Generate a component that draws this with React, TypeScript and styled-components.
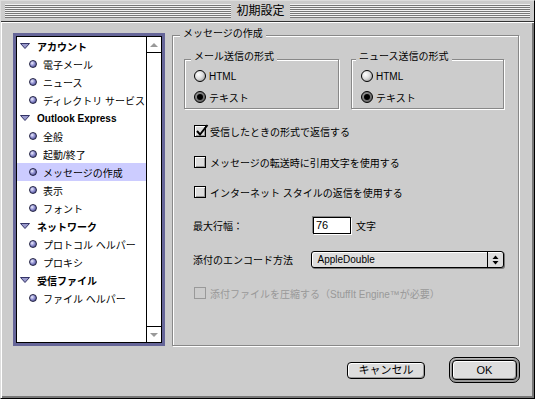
import styled, { createGlobalStyle } from "styled-components";

const GlobalStyle = createGlobalStyle`
  html, body {
    margin: 0;
    padding: 0;
    background: #cccccc;
  }
  body {
    font-family: "Liberation Sans", "Noto Sans CJK JP", sans-serif;
    font-size: 10px;
    color: #000;
  }
  * {
    box-sizing: border-box;
  }
`;

const Window = styled.div`
  width: 535px;
  height: 399px;
  display: flex;
  flex-direction: column;
  background: #cccccc;
  border: 1px solid #000;
  border-top-color: #dddddd;
  border-left-color: #dddddd;
`;

const TitleBar = styled.div`
  height: 21px;
  padding: 3px 4px 3px 4px;
  border-bottom: 1px solid #333;
  display: flex;
`;

const Stripes = styled.div`
  flex: 1;
  display: flex;
  justify-content: center;
  align-items: center;
  background: repeating-linear-gradient(
    to bottom,
    #f2f2f2 0,
    #f2f2f2 1px,
    #777 1px,
    #777 2px
  );
`;

const TitleText = styled.span`
  background: #cccccc;
  padding: 0 5px;
  margin-right: 14px;
  font-size: 12px;
  line-height: 15px;
`;

const Body = styled.div`
  flex: 1;
  display: grid;
  grid-template-columns: 152px 347px;
  grid-template-rows: 313px 26px;
  column-gap: 7px;
  row-gap: 11px;
  padding: 11px 0 0 12px;
  box-shadow: inset 1px 1px 0 #fff, inset -2px -2px 0 #777;
`;

/* ---------- sidebar ---------- */

const Sidebar = styled.div`
  border: 3px solid #666699;
  display: flex;
`;

const ListFrame = styled.div`
  flex: 1;
  display: flex;
  border: 1px solid #000;
  background: #fff;
`;

const List = styled.ul`
  flex: 1;
  margin: 0;
  padding: 0;
  list-style: none;
`;

const Row = styled.li<{ $header?: boolean; $selected?: boolean }>`
  height: 18px;
  display: flex;
  align-items: center;
  gap: ${(p) => (p.$header ? 7 : 6)}px;
  padding-left: ${(p) => (p.$header ? 3 : 12)}px;
  font-weight: ${(p) => (p.$header ? 700 : 400)};
  background: ${(p) => (p.$selected ? "#ccccff" : "transparent")};
  white-space: nowrap;
`;

const Bullet = styled.span`
  width: 8px;
  height: 8px;
  border-radius: 50%;
  border: 1px solid #222244;
  background: radial-gradient(
    circle at 35% 35%,
    #eeeeff 0,
    #9090d0 45%,
    #333377 100%
  );
  flex: none;
`;

const Scrollbar = styled.div`
  width: 15px;
  border-left: 1px solid #000;
  display: flex;
  flex-direction: column;
  justify-content: space-between;
`;

const ScrollArrow = styled.div<{ $down?: boolean }>`
  height: 16px;
  display: flex;
  align-items: center;
  justify-content: center;
  ${(p) => (p.$down ? "border-top: 1px solid #000;" : "border-bottom: 1px solid #000;")}
  &::after {
    content: "";
    border-left: 4px solid transparent;
    border-right: 4px solid transparent;
    ${(p) => (p.$down ? "border-top: 4px solid #999;" : "border-bottom: 4px solid #999;")}
  }
`;

/* ---------- group boxes ---------- */

const GroupBox = styled.div`
  position: relative;
  border: 1px solid #888;
  box-shadow: inset 1px 1px 0 #fff, 1px 1px 0 #fff;
`;

const MainGroup = styled(GroupBox)`
  margin-top: 2px;
  height: 311px;
  padding: 23px 14px 0 11px;
  display: flex;
  flex-direction: column;
`;

const GroupTitle = styled.span<{ $left: number; $top: number }>`
  position: absolute;
  top: ${(p) => p.$top}px;
  left: ${(p) => p.$left}px;
  padding: 0 3px;
  background: #cccccc;
  line-height: 12px;
  white-space: nowrap;
`;

const SubRow = styled.div`
  display: flex;
  gap: 12px;
`;

const SubGroup = styled(GroupBox)<{ $width: number }>`
  width: ${(p) => p.$width}px;
  height: 50px;
  padding: 8px 0 0 9px;
  display: flex;
  flex-direction: column;
  gap: 5px;
`;

const OptionRow = styled.label<{ $gap: number; $top?: number; $disabled?: boolean }>`
  height: 16px;
  display: flex;
  align-items: center;
  gap: ${(p) => p.$gap}px;
  margin-top: ${(p) => p.$top ?? 0}px;
  color: ${(p) => (p.$disabled ? "#999" : "#000")};
  white-space: nowrap;
`;

const Radio = styled.span<{ $on?: boolean }>`
  position: relative;
  width: 12px;
  height: 12px;
  flex: none;
  border-radius: 50%;
  border: 1px solid #000;
  background: ${(p) =>
    p.$on
      ? "radial-gradient(circle at 35% 35%, #999 0, #555 100%)"
      : "radial-gradient(circle at 35% 35%, #fff 0, #ddd 45%, #888 100%)"};
  &::after {
    content: "";
    display: ${(p) => (p.$on ? "block" : "none")};
    position: absolute;
    left: 2px;
    top: 2px;
    width: 6px;
    height: 6px;
    border-radius: 50%;
    background: #000;
  }
`;

const Checkbox = styled.span<{ $disabled?: boolean }>`
  position: relative;
  width: 12px;
  height: 12px;
  flex: none;
  border: 1px solid ${(p) => (p.$disabled ? "#999" : "#000")};
  background: ${(p) => (p.$disabled ? "transparent" : "#dddddd")};
  box-shadow: ${(p) =>
    p.$disabled ? "none" : "inset 1px 1px 0 #fff, inset -1px -1px 0 #999"};
`;

const CheckMark = styled.svg`
  position: absolute;
  left: 0;
  top: -3px;
`;

const Checks = styled.div`
  margin-left: 10px;
  display: flex;
  flex-direction: column;
`;

const FieldRow = styled.div<{ $top: number }>`
  display: flex;
  align-items: center;
  margin-top: ${(p) => p.$top}px;
  margin-left: -1px;
`;

const FieldLabel = styled.span`
  width: 120px;
`;

const NumberInput = styled.div`
  width: 38px;
  height: 17px;
  border: 1px solid #000;
  background: #fff;
  box-shadow: -1px -1px 0 #888, 1px 1px 0 #fff;
  padding: 1px 2px;
  font-size: 11px;
  line-height: 13px;
`;

const Unit = styled.span`
  margin-left: 5px;
`;

const Popup = styled.div`
  width: 195px;
  height: 17px;
  display: flex;
  border: 1px solid #000;
  border-radius: 3px;
  background: #dddddd;
  box-shadow: inset 1px 1px 0 #fff, 1px 1px 0 #777;
`;

const PopupValue = styled.span`
  flex: 1;
  padding-left: 5px;
  line-height: 15px;
`;

const PopupArrows = styled.span`
  width: 16px;
  border-left: 1px solid #000;
  display: flex;
  align-items: center;
  justify-content: center;
`;

/* ---------- buttons ---------- */

const ButtonRow = styled.div`
  grid-column: 1 / -1;
  display: flex;
  justify-content: flex-end;
  align-items: center;
  gap: 24px;
  margin-right: -1px;
`;

const Button = styled.button`
  width: 78px;
  height: 17px;
  flex: none;
  padding: 0;
  font-family: inherit;
  font-size: 11px;
  line-height: 15px;
  color: #000;
  border: 1px solid #000;
  border-radius: 4px;
  background: #dddddd;
  box-shadow: inset 1px 1px 0 #fff, inset -1px -1px 0 #999;
`;

const DefaultRing = styled.div`
  width: 71px;
  height: 26px;
  flex: none;
  padding: 2px;
  border: 1px solid #000;
  border-radius: 7px;
  background: #999;
  box-shadow: inset 1px 1px 0 #bbb;
  display: flex;

  & > ${Button} {
    width: 100%;
    height: 100%;
  }
`;

const tree = [
  { label: "アカウント", items: ["電子メール", "ニュース", "ディレクトリ サービス"] },
  { label: "Outlook Express", items: ["全般", "起動/終了", "メッセージの作成", "表示", "フォント"] },
  { label: "ネットワーク", items: ["プロトコル ヘルパー", "プロキシ"] },
  { label: "受信ファイル", items: ["ファイル ヘルパー"] },
];

const Disclosure = () => (
  <svg width="10" height="6" viewBox="0 0 10 6" style={{ flex: "none" }}>
    <polygon points="0.5,0.5 9.5,0.5 5,5.5" fill="#9999cc" stroke="#333366" strokeWidth="1" />
  </svg>
);

export default function App() {
  return (
    <>
      <GlobalStyle />
      <Window>
        <TitleBar>
          <Stripes>
            <TitleText>初期設定</TitleText>
          </Stripes>
        </TitleBar>
        <Body>
          <Sidebar>
            <ListFrame>
              <List>
                {tree.map((g) => (
                  <li key={g.label} style={{ display: "contents" }}>
                    <Row $header as="div">
                      <Disclosure />
                      {g.label}
                    </Row>
                    {g.items.map((it) => (
                      <Row as="div" key={it} $selected={it === "メッセージの作成"}>
                        <Bullet />
                        {it}
                      </Row>
                    ))}
                  </li>
                ))}
              </List>
              <Scrollbar>
                <ScrollArrow />
                <ScrollArrow $down />
              </Scrollbar>
            </ListFrame>
          </Sidebar>

          <MainGroup>
            <GroupTitle $left={7} $top={-8}>メッセージの作成</GroupTitle>
            <SubRow>
              <SubGroup $width={155}>
                <GroupTitle $left={6} $top={-9}>メール送信の形式</GroupTitle>
                <OptionRow $gap={3}>
                  <Radio />
                  HTML
                </OptionRow>
                <OptionRow $gap={3}>
                  <Radio $on />
                  テキスト
                </OptionRow>
              </SubGroup>
              <SubGroup $width={153}>
                <GroupTitle $left={4} $top={-9}>ニュース送信の形式</GroupTitle>
                <OptionRow $gap={3}>
                  <Radio />
                  HTML
                </OptionRow>
                <OptionRow $gap={3}>
                  <Radio $on />
                  テキスト
                </OptionRow>
              </SubGroup>
            </SubRow>

            <Checks>
              <OptionRow $gap={4} $top={14}>
                <Checkbox>
                  <CheckMark width="14" height="14" viewBox="0 0 14 14">
                    <path d="M2 8 L5 11.5 L12.5 2" fill="none" stroke="#000" strokeWidth="2" />
                  </CheckMark>
                </Checkbox>
                受信したときの形式で返信する
              </OptionRow>
              <OptionRow $gap={4} $top={15}>
                <Checkbox />
                メッセージの転送時に引用文字を使用する
              </OptionRow>
              <OptionRow $gap={4} $top={14}>
                <Checkbox />
                インターネット スタイルの返信を使用する
              </OptionRow>

              <FieldRow $top={17}>
                <FieldLabel>最大行幅：</FieldLabel>
                <NumberInput>76</NumberInput>
                <Unit>文字</Unit>
              </FieldRow>
              <FieldRow $top={17}>
                <FieldLabel>添付のエンコード方法</FieldLabel>
                <Popup>
                  <PopupValue>AppleDouble</PopupValue>
                  <PopupArrows>
                    <svg width="7" height="10" viewBox="0 0 7 10">
                      <polygon points="3.5,0.5 6.5,4 0.5,4" fill="#000" />
                      <polygon points="0.5,6 6.5,6 3.5,9.5" fill="#000" />
                    </svg>
                  </PopupArrows>
                </Popup>
              </FieldRow>

              <OptionRow $gap={4} $top={17} $disabled>
                <Checkbox $disabled />
                添付ファイルを圧縮する（StuffIt Engine™が必要）
              </OptionRow>
            </Checks>
          </MainGroup>

          <ButtonRow>
            <Button>キャンセル</Button>
            <DefaultRing>
              <Button>OK</Button>
            </DefaultRing>
          </ButtonRow>
        </Body>
      </Window>
    </>
  );
}
